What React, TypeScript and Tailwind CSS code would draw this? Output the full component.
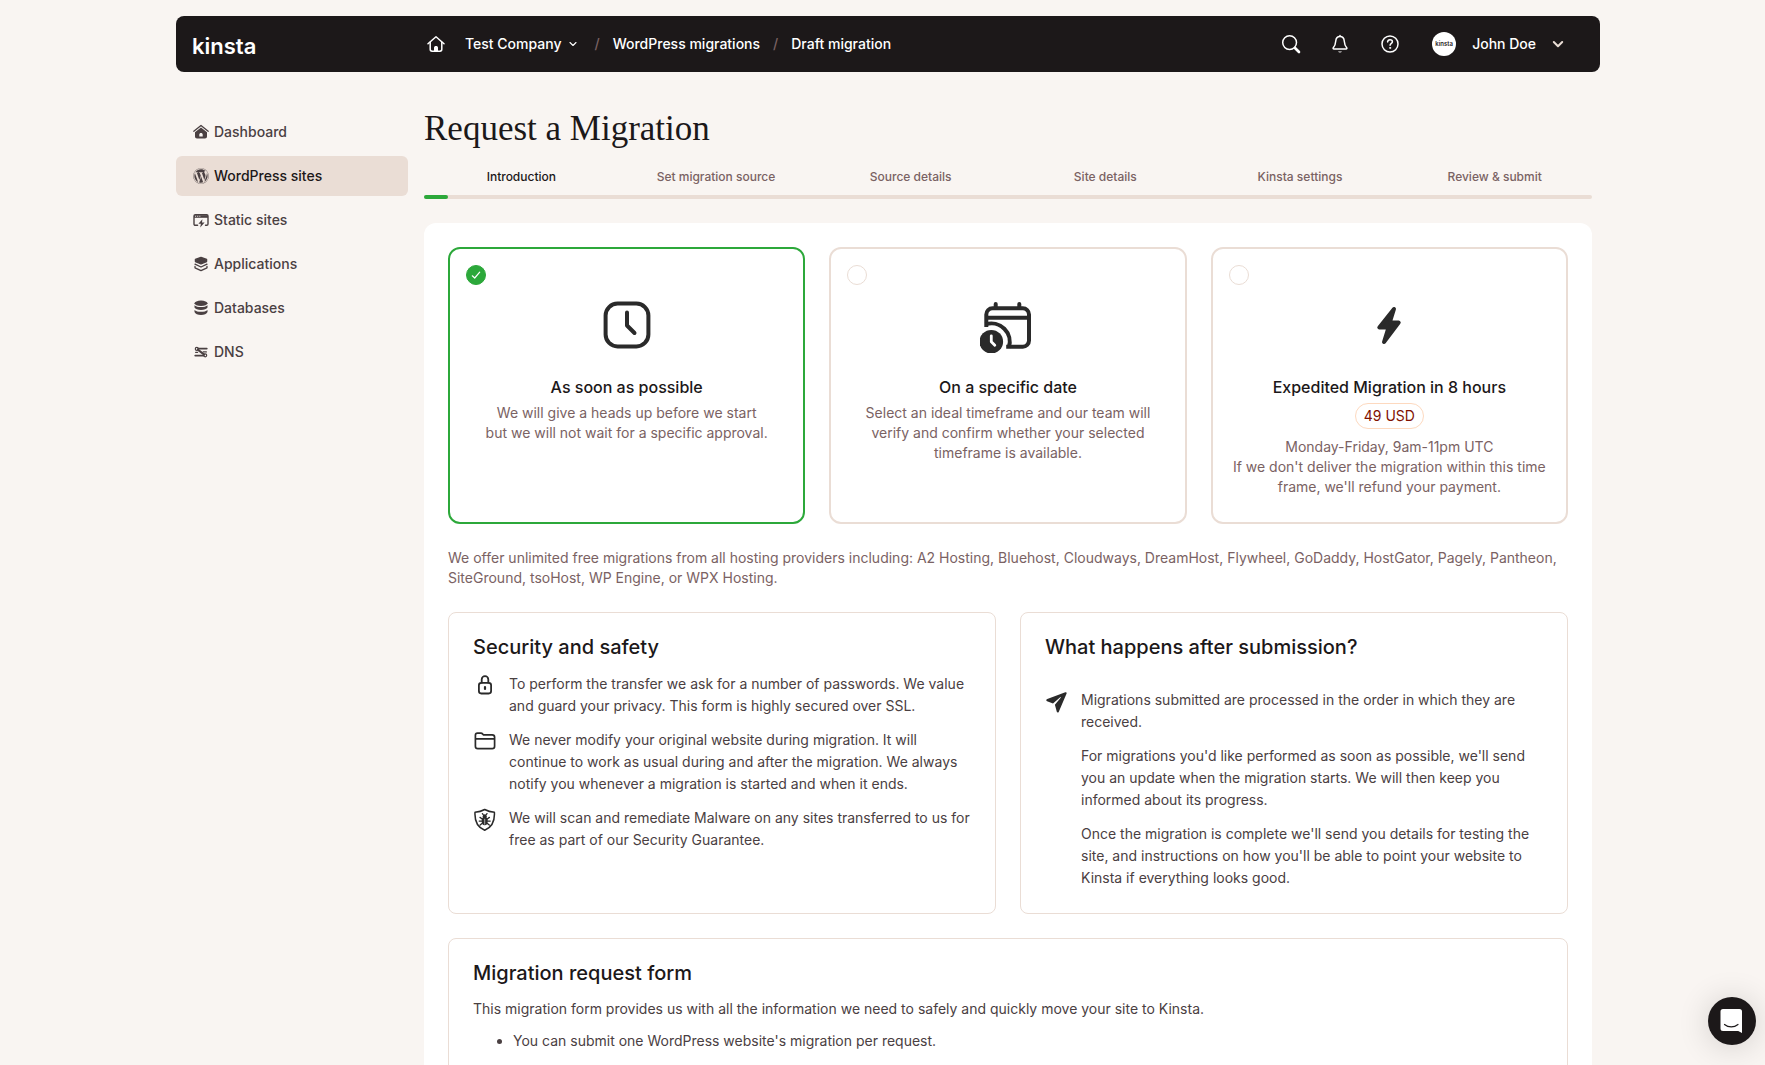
import { useState } from "react";
import type { ReactNode } from "react";
import { FaWordpress } from "react-icons/fa";

const steps = [
  "Introduction",
  "Set migration source",
  "Source details",
  "Site details",
  "Kinsta settings",
  "Review & submit",
];

function DashboardIcon() {
  return (
    <svg viewBox="0 0 16 16" className="size-4" fill="currentColor" aria-hidden="true">
      <path d="M.8 7.200 8 1.400l7.200 5.800" fill="none" stroke="currentColor" strokeWidth="1.300" strokeLinecap="round" strokeLinejoin="round" />
      <path fillRule="evenodd" d="M8 3.400 2 8.200v4.400c0 1.300.8 2 2 2h8c1.200 0 2-.7 2-2V8.200L8 3.400Zm-1.700 9.100V10.400c0-.9.7-1.500 1.700-1.500s1.700.6 1.700 1.500v2.100H6.300Z" />
    </svg>
  );
}

function StaticIcon() {
  return (
    <svg viewBox="0 0 16 16" className="size-4" fill="none" stroke="currentColor" strokeWidth="1.400" strokeLinecap="round" aria-hidden="true">
      <path d="M4.600 13.300H2.300c-.8 0-1.300-.5-1.300-1.300V4c0-.8.5-1.300 1.300-1.300h11.400c.8 0 1.300.5 1.300 1.300v8c0 .8-.5 1.300-1.300 1.300h-1.200" />
      <path d="M1 3.200h14v2.600H1z" fill="currentColor" stroke="none" />
      <path d="M2.600 4.300h.1M4.700 4.300h.1M6.800 4.300h.1" stroke="#f9f5f2" strokeWidth="1" />
      <path d="M9.400 7.200 5.400 11.800h2.500l-.7 3.700 4.400-5H9l.4-3.300Z" fill="currentColor" stroke="none" />
    </svg>
  );
}

function ApplicationsIcon() {
  return (
    <svg viewBox="0 0 16 16" className="size-4" fill="none" stroke="currentColor" strokeWidth="1.300" strokeLinecap="round" strokeLinejoin="round" aria-hidden="true">
      <path d="M8 1.300 13.600 3.400v2.200L8 7.900 2.400 5.600V3.400Z" fill="currentColor" />
      <path d="M2 8.200 8 11l6-2.800" />
      <path d="M2 10.400V11.800l6 2.900 6-2.900V10.400" />
    </svg>
  );
}

function DatabasesIcon() {
  return (
    <svg viewBox="0 0 16 16" className="size-4" fill="currentColor" aria-hidden="true">
      <ellipse cx="8" cy="3.300" rx="6.500" ry="2.700" />
      <path d="M1.500 5.200C2.800 6.500 5.200 7 8 7s5.200-.5 6.500-1.800v2.200C13.700 9 11.200 9.900 8 9.900S2.300 9 1.500 7.400Z" />
      <path d="M1.500 9.900c1.300 1.300 3.700 1.900 6.500 1.900s5.200-.6 6.500-1.900V12c-.8 1.900-3.300 2.900-6.500 2.900S2.300 13.900 1.500 12Z" />
    </svg>
  );
}

function DnsIcon() {
  return (
    <svg viewBox="0 0 16 16" className="size-4" fill="none" stroke="currentColor" strokeLinecap="round" strokeLinejoin="round" aria-hidden="true">
      <path d="M5.400 4.600H13.800M2.200 11.600h8.200" strokeWidth="1.700" />
      <path d="M4.800 5.600 11.200 10.600" strokeWidth="2" />
      <path d="M10.200 7.900h3.200M2.600 8.300h2" strokeWidth="1.200" />
      <circle cx="3.800" cy="4.900" r="1.500" strokeWidth="1.200" />
      <circle cx="12.200" cy="11.300" r="1.500" strokeWidth="1.200" />
    </svg>
  );
}

const nav = [
  { name: "Dashboard", icon: <DashboardIcon /> },
  { name: "WordPress sites", icon: <FaWordpress className="size-4" />, active: true },
  { name: "Static sites", icon: <StaticIcon /> },
  { name: "Applications", icon: <ApplicationsIcon /> },
  { name: "Databases", icon: <DatabasesIcon /> },
  { name: "DNS", icon: <DnsIcon /> },
];

function Header() {
  return (
    <header className="flex h-14 items-center rounded-lg bg-[#1c1819] px-4 text-sm font-medium text-white">
      <a href="#" className="w-[232px] shrink-0 pt-1 text-[22px] leading-6 font-semibold">
        kinsta
      </a>
      <nav aria-label="Breadcrumb" className="flex items-center">
        <a href="#" aria-label="Home" className="mr-5 ml-[3px]">
          <svg viewBox="0 0 18 18" className="size-[18px]" fill="none" stroke="currentColor" strokeWidth="1.500" strokeLinecap="round" strokeLinejoin="round">
            <path d="M1 8.800 9 1.800l8 7" />
            <path d="M3.200 7.300v7c0 1.200.7 1.900 1.900 1.900h7.800c1.200 0 1.900-.7 1.900-1.900v-7" />
            <path d="M7 16v-3.200c0-1 .8-1.700 2-1.700s2 .7 2 1.700V16Z" fill="currentColor" stroke="none" />
          </svg>
        </a>
        <button className="flex items-center gap-2 pr-1">
          Test Company
          <svg viewBox="0 0 8 8" className="size-2" fill="none" stroke="currentColor" strokeWidth="1.100" strokeLinecap="round" strokeLinejoin="round" aria-hidden="true">
            <path d="M1 2.500 4 5.500 7 2.500" />
          </svg>
        </button>
        <span className="mx-[13px] text-[#7a6263]">/</span>
        <a href="#">WordPress migrations</a>
        <span className="mx-[13px] text-[#7a6263]">/</span>
        <a href="#">Draft migration</a>
      </nav>
      <div className="ml-auto flex items-center pr-5">
        <button aria-label="Search" className="mr-[29px]">
          <svg viewBox="0 0 20 20" className="size-5" fill="none" stroke="currentColor" strokeLinecap="round">
            <circle cx="8.600" cy="8.600" r="6.900" strokeWidth="1.500" />
            <path d="M14 14l4 4" strokeWidth="2.600" />
          </svg>
        </button>
        <button aria-label="Notifications" className="mr-[30px]">
          <svg viewBox="0 0 20 20" className="size-5" fill="none" stroke="currentColor" strokeWidth="1.500" strokeLinecap="round" strokeLinejoin="round">
            <path d="M10 2.400c-2.600 0-4 1.800-4.200 4.300-.3 3.800-1 5.400-2.500 7.100-.5.700-.1 1.200.6 1.200h12.200c.7 0 1.100-.5.6-1.200-1.500-1.700-2.200-3.300-2.500-7.100-.2-2.500-1.600-4.300-4.200-4.300Z" />
            <path d="M10 2.200V1.500" />
            <path d="M8 17.400c.5.700 1.200 1 2 1s1.500-.3 2-1Z" fill="currentColor" stroke="none" />
          </svg>
        </button>
        <button aria-label="Help" className="mr-8">
          <svg viewBox="0 0 20 20" className="size-5" fill="none" stroke="currentColor" strokeWidth="1.500" strokeLinecap="round" strokeLinejoin="round">
            <circle cx="10" cy="10" r="8" />
            <path d="M7.600 7.900C7.700 6.500 8.700 5.700 10 5.700s2.400.8 2.400 2c0 1.600-2.300 1.700-2.300 3.500" />
            <circle cx="10.100" cy="13.900" r=".6" fill="currentColor" strokeWidth=".8" />
          </svg>
        </button>
        <button className="flex items-center">
          <span className="flex size-6 items-center justify-center rounded-full bg-white text-[6px] leading-none font-semibold text-[#1c1819]">
            kinsta
          </span>
          <span className="ml-4">John Doe</span>
          <svg viewBox="0 0 12 12" className="ml-4 size-3" fill="none" stroke="#eaddd5" strokeWidth="2" strokeLinecap="round" strokeLinejoin="round" aria-hidden="true">
            <path d="M1.800 4 6 8.200 10.200 4" />
          </svg>
        </button>
      </div>
    </header>
  );
}

function ClockIcon() {
  return (
    <svg viewBox="0 0 56 56" className="size-14" fill="none" stroke="currentColor" strokeWidth="4" strokeLinecap="round" strokeLinejoin="round" aria-hidden="true">
      <rect x="6.600" y="6.600" width="42.800" height="42.800" rx="12" />
      <path d="M28 15.500V28.500L35.500 36" />
    </svg>
  );
}

function CalendarIcon() {
  return (
    <svg viewBox="0 0 56 56" className="size-14" fill="none" stroke="currentColor" strokeWidth="4" aria-hidden="true">
      <path d="M6.300 30V17.500a6.200 6.200 0 0 1 6.200-6.200H42.800a6.200 6.200 0 0 1 6.200 6.200V43.500a6.200 6.200 0 0 1-6.200 6.200H26.200" />
      <path d="M6.300 20.700H49" />
      <path d="M15.700 7v4M39.300 7v4" strokeLinecap="round" />
      <path d="M5.500 27.400A18.300 18.300 0 0 1 28.800 50.500" />
      <circle cx="11.300" cy="44.700" r="11.800" fill="currentColor" stroke="none" />
      <path d="M11.300 38.800V44.700L14.800 48.300" stroke="#fff" strokeWidth="2.800" strokeLinecap="round" strokeLinejoin="round" />
    </svg>
  );
}

function BoltIcon() {
  return (
    <svg viewBox="0 0 56 56" className="size-14" fill="currentColor" stroke="currentColor" strokeWidth="4" strokeLinejoin="round" aria-hidden="true">
      <path d="M33 12 18.300 30.500H27.500L23 45 37.700 25.500H28.800Z" />
    </svg>
  );
}

type OptionProps = {
  title: string;
  icon: ReactNode;
  checked: boolean;
  onSelect: () => void;
  children: ReactNode;
};

function Option({ title, icon, checked, onSelect, children }: OptionProps) {
  return (
    <label
      className={`relative flex cursor-pointer flex-col items-center rounded-xl border-2 px-4 pt-12 pb-[25px] text-center ${
        checked ? "border-[#2ca83a]" : "border-[#eaddd5]"
      }`}
    >
      <input
        type="radio"
        name="timing"
        checked={checked}
        onChange={onSelect}
        className="absolute top-4 left-4 size-5 appearance-none rounded-full border border-[#eaddd5] checked:border-[#2ca83a] checked:bg-[#2ca83a]"
      />
      {checked && (
        <svg viewBox="0 0 20 20" className="pointer-events-none absolute top-4 left-4 size-5" fill="none" stroke="#fff" strokeWidth="1.200" strokeLinecap="round" strokeLinejoin="round" aria-hidden="true">
          <path d="M6.300 10.800 8.700 13 13.700 7.200" />
        </svg>
      )}
      <span className="text-[#2a2a2a]">{icon}</span>
      <span className="mt-[22px] mb-1 text-base leading-6 font-medium text-[#1c1819]">{title}</span>
      <span className="flex flex-col items-center text-sm leading-5 text-[#7a6263]">{children}</span>
    </label>
  );
}

function Note({ icon, children }: { icon: ReactNode; children: ReactNode }) {
  return (
    <li className="flex items-start gap-3">
      <span className="size-6 shrink-0 text-[#2a2a2a]">{icon}</span>
      <div className="flex flex-col gap-3">{children}</div>
    </li>
  );
}

export default function App() {
  const [timing, setTiming] = useState("asap");

  return (
    <div className="min-h-screen bg-[#f9f5f2] pt-4 pl-[11px] font-['Inter',sans-serif] text-sm text-[#4a4042]">
      <div className="mx-auto max-w-[1424px]">
        <Header />

        <div className="flex gap-4 pr-2">
          <nav aria-label="Main" className="mt-10 flex w-[232px] shrink-0 flex-col gap-1">
            {nav.map((item) => (
              <a
                key={item.name}
                href="#"
                className={`flex h-10 items-center gap-[5px] rounded-md pr-4 pl-[17px] font-medium ${
                  item.active ? "bg-[#eaddd5]" : ""
                }`}
              >
                {item.icon}
                <span className={item.active ? "text-[#1c1819]" : ""}>{item.name}</span>
              </a>
            ))}
          </nav>

          <main className="min-w-0 flex-1 pt-[37px]">
            <h1 className="font-['Liberation_Serif',serif] text-[35px] leading-10 text-[#1c1819]">
              Request a Migration
            </h1>

            <ol className="mt-[19px] grid grid-cols-6 text-center text-xs leading-[18px] font-medium text-[#7a6263]">
              {steps.map((step, i) => (
                <li key={step} className={i === 0 ? "text-[#1c1819]" : ""}>
                  {step}
                </li>
              ))}
            </ol>
            <div className="mt-[9px] h-1 rounded-full bg-[#eaddd5]">
              <div className="h-1 w-6 rounded-full bg-[#2ca83a]" />
            </div>

            <div className="mt-6 flex flex-col gap-6 rounded-t-xl bg-white p-6">
              <div className="grid grid-cols-3 gap-6">
                <Option title="As soon as possible" icon={<ClockIcon />} checked={timing === "asap"} onSelect={() => setTiming("asap")}>
                  <span>We will give a heads up before we start</span>
                  <span>but we will not wait for a specific approval.</span>
                </Option>
                <Option title="On a specific date" icon={<CalendarIcon />} checked={timing === "date"} onSelect={() => setTiming("date")}>
                  <span className="max-w-[300px]">
                    Select an ideal timeframe and our team will verify and confirm whether your selected timeframe is available.
                  </span>
                </Option>
                <Option title="Expedited Migration in 8 hours" icon={<BoltIcon />} checked={timing === "expedited"} onSelect={() => setTiming("expedited")}>
                  <span className="mb-2 rounded-full border border-[#fdd9bf] px-2 py-[2px] text-[#811100]">49 USD</span>
                  <span>Monday-Friday, 9am-11pm UTC</span>
                  <span>If we don't deliver the migration within this time frame, we'll refund your payment.</span>
                </Option>
              </div>

              <p className="leading-5 text-[#7a6263]">
                We offer unlimited free migrations from all hosting providers including: A2 Hosting, Bluehost, Cloudways,
                DreamHost, Flywheel, GoDaddy, HostGator, Pagely, Pantheon, SiteGround, tsoHost, WP Engine, or WPX Hosting.
              </p>

              <div className="grid grid-cols-2 gap-6">
                <section className="rounded-lg border border-[#eaddd5] px-6 pt-5 pb-6">
                  <h2 className="text-xl leading-7 font-medium text-[#1c1819]">Security and safety</h2>
                  <ul className="mt-3 flex flex-col gap-3 leading-[22px]">
                    <Note
                      icon={
                        <svg viewBox="0 0 24 24" className="size-6" fill="none" stroke="currentColor" strokeWidth="1.800" strokeLinecap="round" strokeLinejoin="round" aria-hidden="true">
                          <rect x="5.900" y="9.900" width="12.200" height="10.600" rx="2.400" />
                          <path d="M8.700 9.700V6.500a3.300 3.300 0 0 1 6.600 0v3.200" />
                          <path d="M12 14v2" strokeWidth="2.200" />
                        </svg>
                      }
                    >
                      <p>
                        To perform the transfer we ask for a number of passwords. We value and guard your privacy. This form
                        is highly secured over SSL.
                      </p>
                    </Note>
                    <Note
                      icon={
                        <svg viewBox="0 0 24 24" className="size-6" fill="none" stroke="currentColor" strokeWidth="1.700" strokeLinecap="round" strokeLinejoin="round" aria-hidden="true">
                          <path d="M2.400 9.800V6.200c0-1.300.8-2.100 2.100-2.100h3.400c.8 0 1.200.2 1.700.8l.7.900h8.900c1.500 0 2.400.9 2.400 2.400v9c0 1.500-.9 2.400-2.400 2.400H4.800c-1.500 0-2.400-.9-2.400-2.400V9.800h19.200" />
                        </svg>
                      }
                    >
                      <p>
                        We never modify your original website during migration. It will continue to work as usual during and
                        after the migration. We always notify you whenever a migration is started and when it ends.
                      </p>
                    </Note>
                    <Note
                      icon={
                        <svg viewBox="0 0 24 24" className="size-6" fill="none" stroke="currentColor" strokeLinecap="round" strokeLinejoin="round" aria-hidden="true">
                          <path d="M11.700 2.500c2.800 1.600 6 2.500 9.700 2.700.5 8.600-2.200 15-9.700 18C4.200 20.200 1.500 13.800 2 5.200c3.700-.2 6.900-1.100 9.700-2.700Z" strokeWidth="1.500" />
                          <ellipse cx="11.700" cy="14" rx="3" ry="4.200" fill="currentColor" stroke="none" />
                          <circle cx="11.700" cy="9.200" r="2" fill="currentColor" stroke="none" />
                          <path d="M10.200 7.600 9.400 6.600M13.200 7.600l.8-1M9.200 12 7 10.400M14.200 12l2.200-1.600M9 14.100H6.200M14.400 14.100h2.800M9.300 16.200l-2.200 1.900M14.100 16.200l2.200 1.900" strokeWidth="1.300" />
                          <path d="M11.700 12.200v5" stroke="#fff" strokeWidth=".6" />
                        </svg>
                      }
                    >
                      <p>
                        We will scan and remediate Malware on any sites transferred to us for free as part of our Security
                        Guarantee.
                      </p>
                    </Note>
                  </ul>
                </section>

                <section className="rounded-lg border border-[#eaddd5] px-6 pt-5 pb-6">
                  <h2 className="text-xl leading-7 font-medium text-[#1c1819]">What happens after submission?</h2>
                  <ul className="mt-7 leading-[22px]">
                    <Note
                      icon={
                        <svg viewBox="0 0 24 24" className="size-6" fill="currentColor" aria-hidden="true">
                          <path d="M20.300 3.200 2.300 10c-1.300.5-1.400 1.700-.2 2.200l5.900 2.300 7.200-6.300c.4-.3.8.1.5.5L9.900 15.800l1.900 7c.3 1 1.500 1 1.900.1L21.600 4.600c.4-.9-.4-1.700-1.300-1.400Z" />
                        </svg>
                      }
                    >
                      <p>Migrations submitted are processed in the order in which they are received.</p>
                      <p>
                        For migrations you'd like performed as soon as possible, we'll send you an update when the migration
                        starts. We will then keep you informed about its progress.
                      </p>
                      <p>
                        Once the migration is complete we'll send you details for testing the site, and instructions on how
                        you'll be able to point your website to Kinsta if everything looks good.
                      </p>
                    </Note>
                  </ul>
                </section>
              </div>

              <section className="rounded-lg border border-[#eaddd5] px-6 pt-5 pb-6 leading-[22px]">
                <h2 className="text-xl leading-7 font-medium text-[#1c1819]">Migration request form</h2>
                <p className="mt-[11px]">
                  This migration form provides us with all the information we need to safely and quickly move your site to
                  Kinsta.
                </p>
                <ul className="mt-[10px] list-disc pl-10">
                  <li>You can submit one WordPress website's migration per request.</li>
                </ul>
              </section>
            </div>
          </main>
        </div>
      </div>

      <button
        aria-label="Open chat"
        className="fixed right-[9px] bottom-5 flex size-12 items-center justify-center rounded-full bg-[#1c1819] shadow-[0_2px_32px_rgba(0,0,0,0.16)]"
      >
        <svg viewBox="0 0 24 24" className="size-6" aria-hidden="true">
          <path d="M3 0h16.500a2.500 2.500 0 0 1 2.500 2.500V24l-3.800-2H3a2.500 2.500 0 0 1-2.500-2.500v-17A2.500 2.500 0 0 1 3 0Z" fill="#fff" />
          <path d="M4.500 15.500c4 3.200 9.500 3.200 13.500 0" fill="none" stroke="#1c1819" strokeWidth="1.200" strokeLinecap="round" />
        </svg>
      </button>
    </div>
  );
}
